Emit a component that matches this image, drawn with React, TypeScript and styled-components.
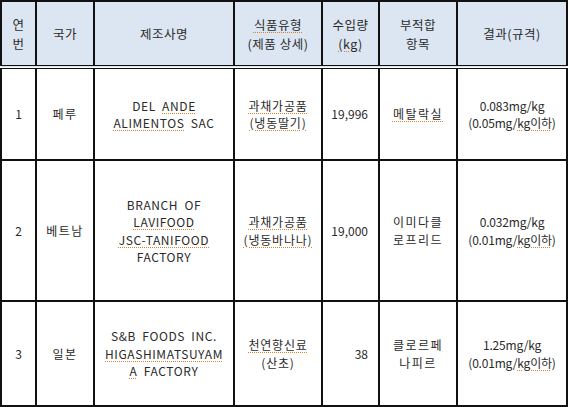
import React from 'react';
import styled, { createGlobalStyle } from 'styled-components';

const GlobalStyle = createGlobalStyle`
	html, body {
		margin: 0;
		padding: 0;
		background: #fff;
	}
	body {
		font-family: 'Noto Sans CJK KR', 'Noto Sans', sans-serif;
		color: #2a2a2a;
	}
`;

const Table = styled.table`
	width: 566px;
	border-collapse: collapse;
	table-layout: fixed;
	font-size: 12px;
	line-height: 17.5px;
`;

const HeadRow = styled.tr`
	height: 66px;
	background: #dce6f2;
`;

const BodyRow = styled.tr<{ $h: number }>`
	height: ${(p) => p.$h}px;
`;

const HeadCell = styled.th`
	border: 2px solid #111;
	border-bottom: 4px double #111;
	font-weight: 400;
	font-size: 12.5px;
	line-height: 19px;
	letter-spacing: 0.5px;
	text-align: center;
	vertical-align: middle;
	padding: 0 2px;
`;

const Cell = styled.td<{ $align?: 'left' | 'center' | 'right'; $spacing?: number }>`
	border: 2px solid #111;
	text-align: ${(p) => p.$align ?? 'center'};
	vertical-align: middle;
	padding: ${(p) => (p.$align === 'right' ? '0 10px 0 2px' : '0 2px')};
	letter-spacing: ${(p) => p.$spacing ?? 0}px;
	word-spacing: 3px;
`;

const Spell = styled.span`
	text-decoration: underline dotted #d9822b;
	text-underline-offset: 2px;
	text-decoration-thickness: 1px;
`;

const cols = [35, 58, 140, 88, 57, 78, 110];

type Row = {
	no: string;
	country: string;
	maker: React.ReactNode;
	type: React.ReactNode;
	amount: string;
	item: React.ReactNode;
	result: React.ReactNode;
	h: number;
};

const rows: Row[] = [
	{
		no: '1',
		country: '페루',
		maker: (
			<>
				DEL <Spell>ANDE</Spell>
				<br />
				<Spell>ALIMENTOS</Spell> SAC
			</>
		),
		type: (
			<>
				<Spell>과채가공품</Spell>
				<br />
				<Spell>(냉동딸기)</Spell>
			</>
		),
		amount: '19,996',
		item: <Spell>메탈락실</Spell>,
		result: (
			<>
				0.083mg/kg
				<br />
				(0.05mg/<Spell>kg이하</Spell>)
			</>
		),
		h: 93,
	},
	{
		no: '2',
		country: '베트남',
		maker: (
			<>
				BRANCH OF
				<br />
				<Spell>LAVIFOOD</Spell>
				<br />
				<Spell>JSC-TANIFOOD</Spell>
				<br />
				FACTORY
			</>
		),
		type: (
			<>
				<Spell>과채가공품</Spell>
				<br />
				<Spell>(냉동바나나)</Spell>
			</>
		),
		amount: '19,000',
		item: (
			<>
				이미다클
				<br />
				로프리드
			</>
		),
		result: (
			<>
				0.032mg/kg
				<br />
				(0.01mg/<Spell>kg이하</Spell>)
			</>
		),
		h: 141,
	},
	{
		no: '3',
		country: '일본',
		maker: (
			<>
				S&amp;B FOODS INC.
				<br />
				<Spell>HIGASHIMATSUYAM</Spell>
				<br />
				<Spell>A</Spell> FACTORY
			</>
		),
		type: (
			<>
				<Spell>천연향신료</Spell>
				<br />
				(산초)
			</>
		),
		amount: '38',
		item: (
			<>
				클로르페
				<br />
				나피르
			</>
		),
		result: (
			<>
				1.25mg/kg
				<br />
				(0.01mg/<Spell>kg이하</Spell>)
			</>
		),
		h: 105,
	},
];

export default function App() {
	return (
		<>
			<GlobalStyle />
			<Table>
				<colgroup>
					{cols.map((w, i) => (
						<col key={i} style={{ width: w }} />
					))}
				</colgroup>
				<thead>
					<HeadRow>
						<HeadCell>
							연<br />번
						</HeadCell>
						<HeadCell>국가</HeadCell>
						<HeadCell>제조사명</HeadCell>
						<HeadCell>
							<Spell>식품유형</Spell>
							<br />
							(제품 상세)
						</HeadCell>
						<HeadCell>
							수입량
							<br />
							<Spell>(kg)</Spell>
						</HeadCell>
						<HeadCell>
							부적합
							<br />
							항목
						</HeadCell>
						<HeadCell>결과(규격)</HeadCell>
					</HeadRow>
				</thead>
				<tbody>
					{rows.map((r) => (
						<BodyRow key={r.no} $h={r.h}>
							<Cell>{r.no}</Cell>
							<Cell $spacing={1.5}>{r.country}</Cell>
							<Cell $spacing={0.6}>{r.maker}</Cell>
							<Cell $spacing={0.8}>{r.type}</Cell>
							<Cell $align="right">{r.amount}</Cell>
							<Cell $spacing={1.5}>{r.item}</Cell>
							<Cell $spacing={-0.2}>{r.result}</Cell>
						</BodyRow>
					))}
				</tbody>
			</Table>
		</>
	);
}
